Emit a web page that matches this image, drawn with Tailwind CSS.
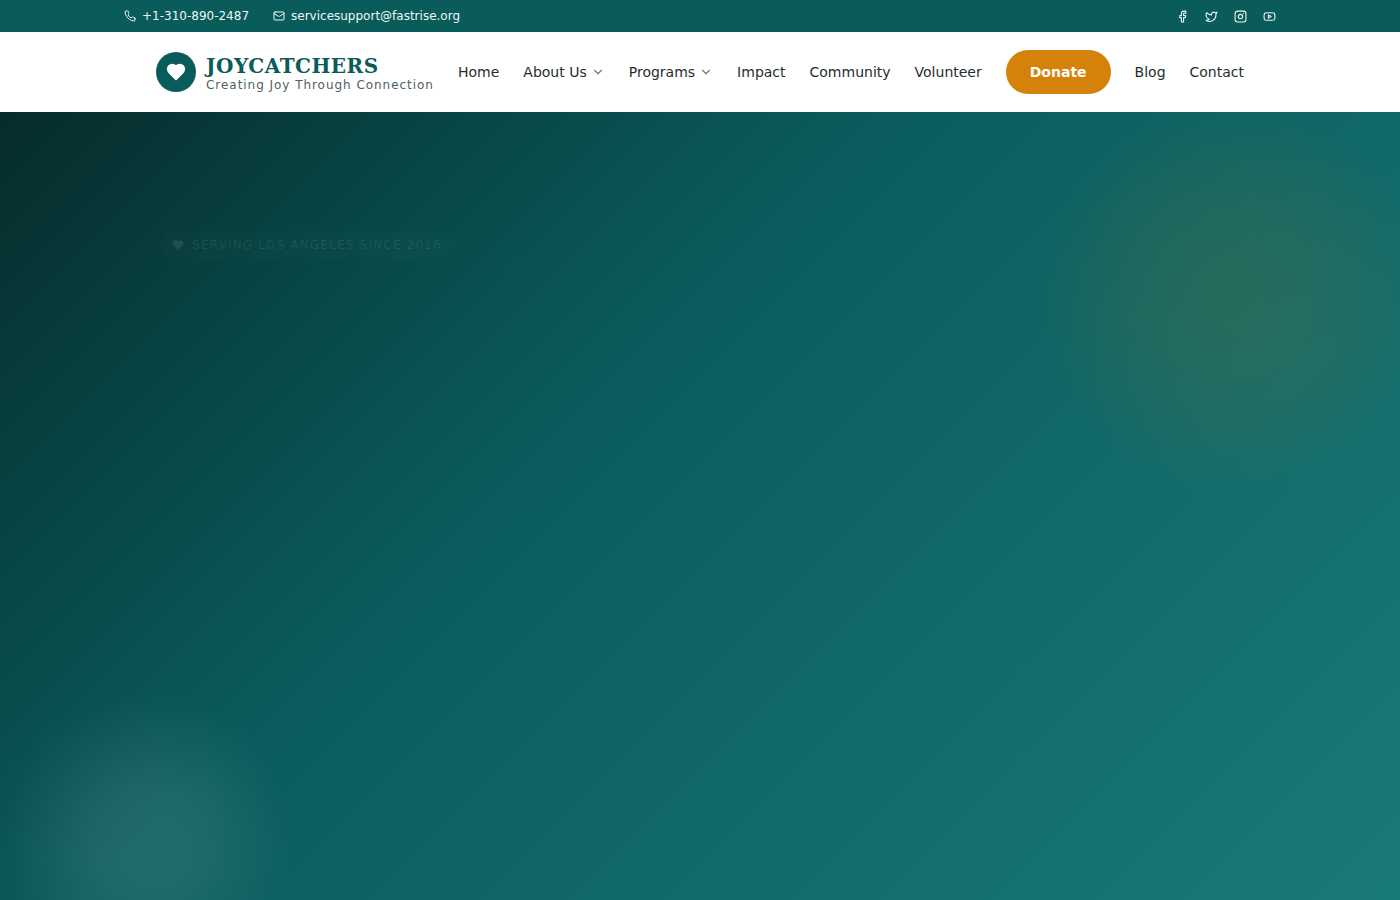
<!DOCTYPE html>
<html lang="en">
<head>
<meta charset="utf-8">
<title>Joycatchers</title>
<script src="https://cdn.jsdelivr.net/npm/@tailwindcss/browser@4"></script>
</head>
<body class="h-screen overflow-hidden flex flex-col font-['DejaVu_Sans',sans-serif]">
<div class="h-8 shrink-0 bg-[#0a5c5a] text-[#edf7f6] text-xs">
  <div class="max-w-[1152px] mx-auto h-full flex items-center justify-between">
    <div class="flex items-center gap-6">
      <a class="flex items-center gap-1.5"><svg class="size-3" viewBox="0 0 24 24" fill="none" stroke="currentColor" stroke-width="2" stroke-linecap="round" stroke-linejoin="round"><path d="M22 16.92v3a2 2 0 0 1-2.18 2 19.79 19.79 0 0 1-8.63-3.07 19.5 19.5 0 0 1-6-6 19.79 19.79 0 0 1-3.07-8.67A2 2 0 0 1 4.11 2h3a2 2 0 0 1 2 1.72 12.84 12.84 0 0 0 .7 2.81 2 2 0 0 1-.45 2.11L8.09 9.91a16 16 0 0 0 6 6l1.27-1.27a2 2 0 0 1 2.11-.45 12.84 12.84 0 0 0 2.81.7A2 2 0 0 1 22 16.92z"/></svg><span>+1-310-890-2487</span></a>
      <a class="flex items-center gap-1.5"><svg class="size-3" viewBox="0 0 24 24" fill="none" stroke="currentColor" stroke-width="2" stroke-linecap="round" stroke-linejoin="round"><rect x="2" y="4" width="20" height="16" rx="2"/><path d="m22 7-8.97 5.7a1.94 1.94 0 0 1-2.06 0L2 7"/></svg><span>servicesupport@fastrise.org</span></a>
    </div>
    <div class="flex items-center gap-4">
      <svg class="size-[13px]" viewBox="0 0 24 24" fill="none" stroke="currentColor" stroke-width="2" stroke-linecap="round" stroke-linejoin="round"><path d="M18 2h-3a5 5 0 0 0-5 5v3H7v4h3v8h4v-8h3l1-4h-4V7a1 1 0 0 1 1-1h3z"/></svg>
      <svg class="size-[13px]" viewBox="0 0 24 24" fill="none" stroke="currentColor" stroke-width="2" stroke-linecap="round" stroke-linejoin="round"><path d="M22 4s-.7 2.1-2 3.4c1.6 10-9.4 17.3-18 11.6 2.2.1 4.4-.6 6-2C3 15.500.5 9.600 3 5c2.200 2.600 5.600 4.100 9 4-.9-4.200 4-6.600 7-3.800 1.100 0 3-1.200 3-1.200z"/></svg>
      <svg class="size-[13px]" viewBox="0 0 24 24" fill="none" stroke="currentColor" stroke-width="2" stroke-linecap="round" stroke-linejoin="round"><rect x="2" y="2" width="20" height="20" rx="5"/><circle cx="12" cy="12" r="4"/><path d="M17.500 6.500h.01"/></svg>
      <svg class="size-[13px]" viewBox="0 0 24 24" fill="none" stroke="currentColor" stroke-width="2" stroke-linecap="round" stroke-linejoin="round"><path d="M2.500 17a24.120 24.120 0 0 1 0-10 2 2 0 0 1 1.400-1.400 49.560 49.560 0 0 1 16.200 0A2 2 0 0 1 21.500 7a24.120 24.120 0 0 1 0 10 2 2 0 0 1-1.400 1.400 49.550 49.550 0 0 1-16.200 0A2 2 0 0 1 2.500 17"/><path d="m10 15 5-3-5-3z"/></svg>
    </div>
  </div>
</div>
<header class="h-20 shrink-0 bg-white">
  <div class="w-[1088px] mx-auto h-full flex items-center justify-between">
    <a class="flex items-center gap-2.5">
      <span class="size-10 rounded-full bg-[#0a5c5a] flex items-center justify-center"><svg class="size-5 text-white" viewBox="0 0 24 24" fill="currentColor" stroke="currentColor" stroke-width="2" stroke-linejoin="round"><path d="M19 14c1.490-1.460 3-3.210 3-5.500A5.500 5.500 0 0 0 16.500 3c-1.760 0-3 .5-4.500 2-1.500-1.500-2.740-2-4.500-2A5.500 5.500 0 0 0 2 8.500c0 2.300 1.500 4.050 3 5.500l7 7Z"/></svg></span>
      <span class="flex flex-col pt-0.5">
        <span class="font-['DejaVu_Serif',serif] font-bold text-xl leading-6 tracking-[0.5px] text-[#0a5c5a]">JOYCATCHERS</span>
        <span class="text-xs leading-[14px] tracking-[0.96px] text-[#4f5f5f]">Creating Joy Through Connection</span>
      </span>
    </a>
    <nav class="flex items-center gap-6 text-sm text-[#1f2d2d] whitespace-nowrap">
      <a>Home</a>
      <a class="flex items-center gap-1">About Us<svg class="size-3.5 text-[#6b7878]" viewBox="0 0 24 24" fill="none" stroke="currentColor" stroke-width="2" stroke-linecap="round" stroke-linejoin="round"><path d="m6 9 6 6 6-6"/></svg></a>
      <a class="flex items-center gap-1">Programs<svg class="size-3.5 text-[#6b7878]" viewBox="0 0 24 24" fill="none" stroke="currentColor" stroke-width="2" stroke-linecap="round" stroke-linejoin="round"><path d="m6 9 6 6 6-6"/></svg></a>
      <a>Impact</a><a>Community</a><a>Volunteer</a>
      <a class="h-11 px-6 flex items-center rounded-full bg-[#d4820a] text-white font-bold">Donate</a>
      <a>Blog</a><a>Contact</a>
    </nav>
  </div>
</header>
<main class="relative flex-1 overflow-hidden bg-[linear-gradient(135deg,#062b2b_0%,#0a5c5c_40%,#1a7a78_100%)]">
  <div class="absolute left-[1035px] top-[-12px] size-[400px] rounded-full bg-[radial-gradient(circle_closest-side,rgba(212,130,10,0.11)_0%,rgba(212,130,10,0.095)_30%,rgba(212,130,10,0.05)_68%,rgba(212,130,10,0)_98%)]"></div>
  <div class="absolute left-[-5px] top-[578px] size-[300px] rounded-full bg-[radial-gradient(circle_closest-side,rgba(255,255,255,0.09)_0%,rgba(255,255,255,0.08)_35%,rgba(255,255,255,0.03)_72%,rgba(255,255,255,0)_98%)]"></div>
  <div class="pl-40 pt-[119px] flex">
    <div class="h-7 px-3 flex items-center gap-2 rounded-full bg-white/[0.01] text-xs tracking-[1.2px] text-white/[0.09]"><svg class="size-3" viewBox="0 0 24 24" fill="currentColor" stroke="currentColor" stroke-width="1" stroke-linejoin="round"><path d="M19 14c1.490-1.460 3-3.210 3-5.500A5.500 5.500 0 0 0 16.500 3c-1.760 0-3 .5-4.500 2-1.500-1.500-2.740-2-4.500-2A5.500 5.500 0 0 0 2 8.500c0 2.300 1.500 4.050 3 5.500l7 7Z"/></svg><span>SERVING LOS ANGELES SINCE 2016</span></div>
  </div>
</main>
</body>
</html>
